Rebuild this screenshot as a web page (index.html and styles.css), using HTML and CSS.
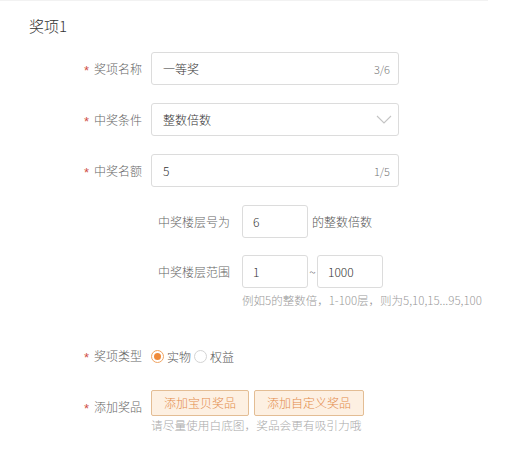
FILE: index.html
```html
<!DOCTYPE html>
<html lang="zh-CN">
<head>
<meta charset="utf-8">
<title>奖项1</title>
<link rel="stylesheet" href="styles.css">
</head>
<body>
<div class="page">
  <h2 class="title">奖项1</h2>

  <div class="row">
    <div class="label"><span class="req">*</span>奖项名称</div>
    <div class="field"><span class="val">一等奖</span><span class="count">3/6</span></div>
  </div>

  <div class="row">
    <div class="label"><span class="req">*</span>中奖条件</div>
    <div class="field select"><span class="val">整数倍数</span>
      <svg class="chev" width="16" height="9" viewBox="0 0 16 9"><polyline points="1,1 8,8 15,1" fill="none" stroke="#c4c4c4" stroke-width="1.1"/></svg>
    </div>
  </div>

  <div class="row">
    <div class="label"><span class="req">*</span>中奖名额</div>
    <div class="field"><span class="val">5</span><span class="count">1/5</span></div>
  </div>

  <div class="sub">
    <div class="sublabel">中奖楼层号为</div>
    <div class="box">6</div>
    <span class="after">的整数倍数</span>
  </div>

  <div class="sub">
    <div class="sublabel">中奖楼层范围</div>
    <div class="box">1</div>
    <span class="tilde">~</span>
    <div class="box">1000</div>
  </div>
  <div class="hint-range">例如5的整数倍，1-100层，则为5,10,15...95,100</div>

  <div class="row radio-row">
    <div class="label"><span class="req">*</span>奖项类型</div>
    <div class="radios">
      <span class="radio on"></span><span class="rtext">实物</span>
      <span class="radio"></span><span class="rtext">权益</span>
    </div>
  </div>

  <div class="row btn-row">
    <div class="label top"><span class="req">*</span>添加奖品</div>
    <div class="btn-col">
      <div class="btns">
        <button class="btn">添加宝贝奖品</button>
        <button class="btn">添加自定义奖品</button>
      </div>
      <div class="hint">请尽量使用白底图，奖品会更有吸引力哦</div>
    </div>
  </div>
</div>
</body>
</html>
```

FILE: styles.css
```css
html, body {
  margin: 0;
  padding: 0;
  background: #fff;
}
body {
  font-family: "Noto Sans CJK SC", "Liberation Sans", sans-serif;
  font-size: 12px;
  font-weight: 300;
  color: #333;
}
.page {
  width: 488px;
  border-top: 1px solid #f2f2f2;
  padding-bottom: 20px;
}
.title {
  margin: 15px 0 0 29px;
  font-size: 15px;
  line-height: 20px;
  font-weight: 300;
  color: #333;
}
.row {
  display: flex;
  align-items: center;
  gap: 9px;
  margin-top: 16px;
}
.row + .row {
  margin-top: 18px;
}
.label {
  width: 142px;
  text-align: right;
  color: #666;
  line-height: 18px;
}
.req {
  display: inline-block;
  color: #d05048;
  font-family: "Liberation Sans", sans-serif;
  font-size: 13px;
  line-height: 12px;
  vertical-align: -1px;
  margin-right: 5px;
}
.field {
  width: 248px;
  height: 33px;
  box-sizing: border-box;
  border: 1px solid #dcdcdc;
  border-radius: 3px;
  display: flex;
  align-items: center;
  justify-content: space-between;
  padding: 0 8px 0 11px;
}
.val {
  color: #333;
}
.count {
  color: #777;
  font-size: 11px;
}
.select {
  padding-right: 6px;
}
.chev {
  display: block;
}
.sub {
  display: flex;
  align-items: center;
  margin-top: 18px;
  margin-left: 151px;
}
.sub + .sub {
  margin-top: 17px;
}
.sublabel {
  width: 79px;
  text-align: right;
  color: #666;
  margin-right: 12px;
}
.box {
  width: 66px;
  height: 33px;
  box-sizing: border-box;
  border: 1px solid #dcdcdc;
  border-radius: 3px;
  display: flex;
  align-items: center;
  padding-left: 10px;
  color: #333;
}
.after {
  margin-left: 4px;
  color: #555;
}
.tilde {
  width: 9px;
  text-align: center;
  color: #666;
}
.hint-range {
  margin: 3px 0 0 242px;
  line-height: 18px;
  font-size: 11.5px;
  color: #999;
  white-space: nowrap;
}
.row.radio-row {
  margin-top: 37px;
}
.radios {
  display: flex;
  align-items: center;
  height: 20px;
}
.radio {
  width: 13px;
  height: 13px;
  box-sizing: border-box;
  border: 1px solid #d4d4d4;
  border-radius: 50%;
  position: relative;
}
.radio.on {
  border-color: #f0a462;
}
.radio.on::after {
  content: "";
  position: absolute;
  left: 2px;
  top: 2px;
  width: 7px;
  height: 7px;
  border-radius: 50%;
  background: #ef8a3a;
}
.rtext {
  margin: 0 3px 0 3px;
  color: #555;
}
.row.btn-row {
  margin-top: 24px;
  align-items: flex-start;
}
.label.top {
  padding-top: 8px;
}
.btns {
  display: flex;
  gap: 5px;
}
.btn {
  height: 26px;
  padding: 0 12px;
  margin: 0;
  border: 1px solid #e3bd94;
  border-radius: 2px;
  background: #fdf0e2;
  color: #e38b4b;
  font-family: inherit;
  font-size: 12px;
  font-weight: 300;
  line-height: 24px;
}
.hint {
  margin-top: 1px;
  line-height: 16px;
  font-size: 11.7px;
  color: #aaa;
}
```
